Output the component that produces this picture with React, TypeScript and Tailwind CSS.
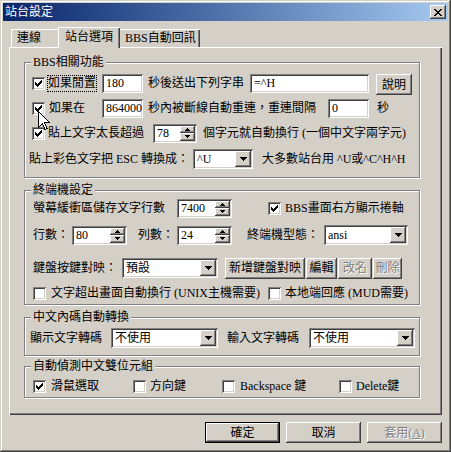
import React from "react";

const sunken =
  "bg-white shadow-[inset_1px_1px_#808080,inset_-1px_-1px_#ffffff,inset_2px_2px_#404040,inset_-2px_-2px_#d4d0c8]";
const raised =
  "bg-[#d4d0c8] shadow-[inset_-1px_-1px_#404040,inset_1px_1px_#ffffff,inset_-2px_-2px_#808080,inset_2px_2px_#d4d0c8]";
const disabledText = "text-[#808080] [text-shadow:1px_1px_0_#ffffff]";

const Pix = ({ rows, color = "#000" }: { rows: string[]; color?: string }) => (
  <svg width={rows[0].length} height={rows.length} shapeRendering="crispEdges">
    {rows.flatMap((r, y) =>
      [...r].map((c, x) =>
        c === "#" ? <rect key={`${x}-${y}`} x={x} y={y} width={1} height={1} fill={color} /> : null
      )
    )}
  </svg>
);

const checkRows = ["......#", ".....##", "#...###", "##.###.", "#####..", ".###...", "..#...."];
const closeRows = ["##....##", ".##..##.", "..####..", "...##...", "..####..", ".##..##.", "##....##"];
const downRows = ["#######", ".#####.", "..###..", "...#..."];
const spinUp = ["..#..", ".###.", "#####"];
const spinDown = ["#####", ".###.", "..#.."];

const Check = ({ on, className = "" }: { on?: boolean; className?: string }) => (
  <span className={`${sunken} w-[13px] h-[13px] shrink-0 flex items-center justify-center ${className}`}>
    {on && <Pix rows={checkRows} />}
  </span>
);

const Field = ({ w, children, className = "" }: { w: string; children: React.ReactNode; className?: string }) => (
  <div className={`${sunken} ${w} h-[19px] shrink-0 flex items-center pl-[4px] whitespace-nowrap ${className}`}>
    {children}
  </div>
);

const Spin = ({ w, value, className = "" }: { w: string; value: string; className?: string }) => (
  <div className={`${sunken} ${w} h-[19px] shrink-0 flex p-[2px] ${className}`}>
    <div className="flex-1 flex items-center pl-[2px]">{value}</div>
    <div className="flex flex-col w-[15px]">
      <div className={`${raised} flex-1 flex items-center justify-center`}>
        <Pix rows={spinUp} />
      </div>
      <div className={`${raised} flex-1 flex items-center justify-center`}>
        <Pix rows={spinDown} />
      </div>
    </div>
  </div>
);

const Combo = ({ w, value, className = "" }: { w: string; value: string; className?: string }) => (
  <div className={`${sunken} ${w} h-[20px] shrink-0 flex p-[2px] ${className}`}>
    <div className="flex-1 flex items-center pl-[2px] whitespace-nowrap">{value}</div>
    <div className={`${raised} w-[16px] flex items-center justify-center`}>
      <Pix rows={downRows} />
    </div>
  </div>
);

const Btn = ({
  w,
  children,
  disabled,
  className = "",
}: {
  w: string;
  children: React.ReactNode;
  disabled?: boolean;
  className?: string;
}) => (
  <div
    className={`${raised} ${w} h-[21px] shrink-0 flex items-center justify-center whitespace-nowrap ${
      disabled ? disabledText : ""
    } ${className}`}
  >
    {children}
  </div>
);

const Group = ({
  title,
  h,
  className = "",
  children,
}: {
  title: string;
  h: string;
  className?: string;
  children: React.ReactNode;
}) => (
  <div
    className={`relative w-[396px] ${h} border border-[#808080] shadow-[inset_1px_1px_#ffffff,1px_1px_#ffffff] flex flex-col ${className}`}
  >
    <span className="absolute left-[6px] -top-[8px] px-[2px] bg-[#d4d0c8] whitespace-nowrap">{title}</span>
    {children}
  </div>
);

const Row = ({ className = "", children }: { className?: string; children: React.ReactNode }) => (
  <div className={`flex items-center h-[22px] whitespace-nowrap ${className}`}>{children}</div>
);

export default function App() {
  return (
    <div className="relative w-[451px] h-[452px] bg-[#d4d0c8] p-[3px] flex flex-col text-[12px] leading-[14px] text-black font-['Liberation_Serif','Noto_Sans_CJK_TC',serif] shadow-[inset_-1px_-1px_#404040,inset_1px_1px_#d4d0c8,inset_-2px_-2px_#808080,inset_2px_2px_#ffffff]">
      {/* title bar */}
      <div className="h-[18px] shrink-0 flex items-center justify-between pl-[2px] pr-[2px] bg-linear-to-r from-[#0a246a] to-[#a6caf0] text-white">
        <span>站台設定</span>
        <div className={`${raised} w-[16px] h-[14px] flex items-center justify-center`}>
          <Pix rows={closeRows} />
        </div>
      </div>

      <div className="flex-1 flex flex-col pl-[6px] pt-[6px]">
        {/* tabs */}
        <div className="relative z-10 flex items-end h-[20px] pl-[2px]">
          <div className="w-[49px] h-[18px] flex items-center pl-[6px] shadow-[inset_1px_1px_#ffffff,inset_-1px_0_#404040,inset_-2px_0_#808080]">
            連線
          </div>
          <div className="w-[62px] h-[21px] -mx-[2px] -mb-[1px] relative z-10 bg-[#d4d0c8] flex items-center pl-[7px] pb-[2px] shadow-[inset_1px_1px_#ffffff,inset_-1px_0_#404040,inset_-2px_0_#808080]">
            站台選項
          </div>
          <div className="w-[82px] h-[18px] flex items-center pl-[7px] shadow-[inset_1px_1px_#ffffff,inset_-1px_0_#404040,inset_-2px_0_#808080]">
            BBS自動回訊
          </div>
        </div>

        {/* tab panel */}
        <div className="w-[433px] h-[368px] shrink-0 pt-[15px] pl-[15px] flex flex-col shadow-[inset_1px_1px_#ffffff,inset_-1px_-1px_#404040,inset_-2px_-2px_#808080]">
          <Group title="BBS相關功能" h="h-[116px]" className="pt-[9px]">
            <Row>
              <Check on className="ml-[7px]" />
              <span className="ml-[2px] w-[50px] h-[17px] border border-dotted border-black flex items-center justify-center">
                如果閒置
              </span>
              <Field w="w-[41px]" className="ml-[5px]">180</Field>
              <span className="ml-[5px]">秒後送出下列字串</span>
              <Field w="w-[119px]" className="ml-[6px]">=^H</Field>
              <Btn w="w-[36px]" className="ml-[7px] mt-[3px]">說明</Btn>
            </Row>
            <Row className="mt-[3px]">
              <Check on className="ml-[7px]" />
              <span className="ml-[4px] w-[53px]">如果在</span>
              <Field w="w-[41px]">864000</Field>
              <span className="ml-[5px]">秒內被斷線自動重連，重連間隔</span>
              <Field w="w-[41px]" className="ml-[12px]">0</Field>
              <span className="ml-[8px]">秒</span>
            </Row>
            <Row className="mt-[3px]">
              <Check on className="ml-[7px]" />
              <span className="ml-[3px]">貼上文字太長超過</span>
              <Spin w="w-[44px]" value="78" className="ml-[9px]" />
              <span className="ml-[6px]">個字元就自動換行 (一個中文字兩字元)</span>
            </Row>
            <Row className="mt-[4px]">
              <span className="ml-[4px] w-[164px]">貼上彩色文字把 ESC 轉換成：</span>
              <Combo w="w-[60px]" value="^U" />
              <span className="ml-[9px]">大多數站台用 ^U或^C^H^H</span>
            </Row>
          </Group>

          <Group title="終端機設定" h="h-[115px]" className="mt-[12px] pt-[6px]">
            <Row>
              <span className="ml-[8px]">螢幕緩衝區儲存文字行數</span>
              <Spin w="w-[55px]" value="7400" className="ml-[12px]" />
              <Check on className="ml-[36px]" />
              <span className="ml-[4px]">BBS畫面右方顯示捲軸</span>
            </Row>
            <Row className="mt-[5px]">
              <span className="ml-[8px] w-[39px]">行數：</span>
              <Spin w="w-[55px]" value="80" />
              <span className="ml-[11px] w-[39px]">列數：</span>
              <Spin w="w-[55px]" value="24" />
              <span className="ml-[15px] w-[77px]">終端機型態：</span>
              <Combo w="w-[84px]" value="ansi" />
            </Row>
            <Row className="mt-[11px]">
              <span className="ml-[8px] w-[89px]">鍵盤按鍵對映：</span>
              <Combo w="w-[96px]" value="預設" />
              <Btn w="w-[80px]" className="ml-[7px]">新增鍵盤對映</Btn>
              <Btn w="w-[31px]" className="ml-[1px]">編輯</Btn>
              <Btn w="w-[34px]" className="ml-[1px]" disabled>改名</Btn>
              <Btn w="w-[29px]" className="ml-[1px]" disabled>刪除</Btn>
            </Row>
            <Row className="mt-[3px]">
              <Check className="ml-[8px]" />
              <span className="ml-[5px] w-[217px]">文字超出畫面自動換行 (UNIX主機需要)</span>
              <Check />
              <span className="ml-[4px]">本地端回應 (MUD需要)</span>
            </Row>
          </Group>

          <Group title="中文內碼自動轉換" h="h-[39px]" className="mt-[12px] pt-[9px]">
            <Row>
              <span className="ml-[5px] w-[81px]">顯示文字轉碼</span>
              <Combo w="w-[107px]" value="不使用" />
              <span className="ml-[9px] w-[82px]">輸入文字轉碼</span>
              <Combo w="w-[106px]" value="不使用" />
            </Row>
          </Group>

          <Group title="自動偵測中文雙位元組" h="h-[32px]" className="mt-[10px] pt-[8px]">
            <Row>
              <Check on className="ml-[8px]" />
              <span className="ml-[5px] w-[82px]">滑鼠選取</span>
              <Check />
              <span className="ml-[4px] w-[72px]">方向鍵</span>
              <Check />
              <span className="ml-[5px] w-[99px]">Backspace 鍵</span>
              <Check />
              <span className="ml-[4px]">Delete鍵</span>
            </Row>
          </Group>
        </div>

        {/* dialog buttons */}
        <div className="mt-[7px] flex gap-[6px] pl-[196px]">
          <div className="w-[75px] h-[21px] border border-black">
            <div className={`${raised} w-full h-full flex items-center justify-center`}>確定</div>
          </div>
          <Btn w="w-[75px]">取消</Btn>
          <Btn w="w-[75px]" disabled>
            套用(<span className="underline">A</span>)
          </Btn>
        </div>
      </div>

      {/* mouse pointer over the second checkbox */}
      <svg className="absolute left-[38px] top-[111px]" width="13" height="20" viewBox="0 0 13 20" shapeRendering="crispEdges">
        <path d="M0.5 0.5 V16.5 L4.5 12.5 L7 18.5 L9 17.5 L6.5 11.5 H11.5 Z" fill="#ffffff" stroke="#000000" />
      </svg>
    </div>
  );
}
